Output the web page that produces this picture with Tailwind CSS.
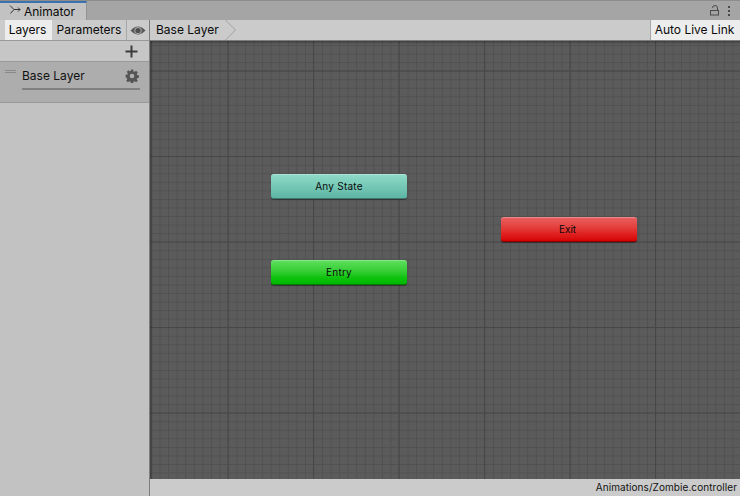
<!DOCTYPE html>
<html lang="en">
<head>
    <title>Animator</title>
    <script src="https://cdn.jsdelivr.net/npm/@tailwindcss/browser@4"></script>
</head>
<body class="w-[740px] h-[496px] overflow-hidden bg-[#c2c2c2] font-['Inter',sans-serif] text-[12px] text-[#0a0a0a]">
    <div class="flex flex-col h-full">
        <!-- Tab bar -->
        <div class="flex h-[20px] shrink-0 bg-[#a5a5a5] border-t border-[#8c8c8c]">
            <div class="flex items-center w-[87px] h-[19px] bg-[#c2c2c2] border-t-2 border-[#3a72b0] border-r border-r-[#939393] pl-[9px] gap-[3px]">
                <svg class="-mt-[3px]" width="12" height="12" viewBox="0 0 12 12" fill="none" stroke="#333" stroke-width="1">
                    <path d="M1 1.500 L5 5.500 L11 5.500 M1.500 9.500 L5 5.500"/>
                    <path d="M9 3.500 L11 5.500 L9 7.500"/>
                </svg>
                <span>Animator</span>
            </div>
            <div class="flex-1 flex items-center justify-end gap-[8px] pr-[10px]">
                <svg width="10" height="11" viewBox="0 0 10 11" fill="none" stroke="#4a4a4a">
                    <rect x="0.500" y="5.500" width="8" height="4.500"/>
                    <path d="M2.500 3 Q2.500 0.500 5 0.500 Q7.500 0.500 7.500 3 V5.500"/>
                </svg>
                <div class="flex flex-col gap-[2px]">
                    <div class="w-[2px] h-[2px] bg-[#4a4a4a]"></div>
                    <div class="w-[2px] h-[2px] bg-[#4a4a4a]"></div>
                    <div class="w-[2px] h-[2px] bg-[#4a4a4a]"></div>
                </div>
            </div>
        </div>

        <div class="flex flex-1 min-h-0">
            <!-- Left panel -->
            <div class="w-[150px] shrink-0 flex flex-col border-r border-[#7d7d7d]">
                <div class="flex h-[21px] bg-[#cbcbcb] border-b border-[#999]">
                    <div class="w-[5px]"></div>
                    <div class="w-[47px] flex items-center justify-center pr-[2px] bg-[#ededed]">Layers</div>
                    <div class="w-[75px] flex items-center justify-center border-r border-[#a8a8a8]">Parameters</div>
                    <div class="flex-1 flex items-center justify-center">
                        <svg width="16" height="11" viewBox="0 0 16 11">
                            <path d="M0.500 5.500 Q8 -2.500 15.500 5.500 Q8 13.500 0.500 5.500 Z" fill="#5a5a5a"/>
                            <circle cx="8" cy="5.500" r="3.600" fill="#a8a8a8"/>
                            <circle cx="8" cy="5.500" r="2.600" fill="#4f4f4f"/>
                        </svg>
                    </div>
                </div>
                <div class="flex items-center justify-end h-[21px] pr-[11px] bg-[#c6c6c6] border-b border-[#999]">
                    <svg width="13" height="13" viewBox="0 0 13 13" fill="#3c3c3c">
                        <rect x="5.500" y="0.500" width="2" height="12"/>
                        <rect x="0.500" y="5.500" width="12" height="2"/>
                    </svg>
                </div>
                <div class="relative h-[41px] bg-[#adadad] border-b border-[#999] pl-[22px] pr-[10px] pt-[6px]">
                    <div class="absolute left-[5px] top-[8px] w-[11px] h-[3px] border-y border-[#8a8a8a]"></div>
                    <div class="flex items-center justify-between h-[16px]">
                        <span class="text-[#111]">Base Layer</span>
                        <svg class="-mt-[1px]" width="14" height="14" viewBox="0 0 24 24" fill="#555">
                            <path fill-rule="evenodd" d="M10 1h4l.6 3.100 1.900.8 2.600-1.800 2.800 2.800-1.800 2.600.8 1.900 3.100.6v4l-3.100.6-.8 1.900 1.800 2.600-2.800 2.800-2.600-1.800-1.900.8-.6 3.100h-4l-.6-3.100-1.900-.8-2.600 1.800-2.800-2.800 1.800-2.600-.8-1.900L1 14v-4l3.100-.6.8-1.900-1.800-2.600 2.800-2.800 2.600 1.800 1.900-.8zM12 8a4 4 0 1 0 0 8 4 4 0 0 0 0-8z"/>
                        </svg>
                    </div>
                    <div class="mt-[4px] -mr-[1px] h-[2px] bg-[#808080]"></div>
                </div>
                <div class="flex-1 bg-[#c2c2c2]"></div>
            </div>

            <!-- Right panel -->
            <div class="flex-1 flex flex-col min-w-0">
                <div class="flex h-[21px] shrink-0 bg-[#cbcbcb] border-b border-[#7d7d7d]">
                    <div class="relative flex items-center pl-[6px] w-[88px]">
                        <span>Base Layer</span>
                        <svg class="absolute left-[75px] top-0" width="12" height="21" viewBox="0 0 12 21" fill="none" stroke="#a0a0a0">
                            <path d="M0.500 0 L10.500 10 L0.500 20"/>
                        </svg>
                    </div>
                    <div class="flex-1"></div>
                    <div class="w-[90px] flex items-center justify-center pr-[2px] bg-[#ededed] border-l border-[#a8a8a8]">Auto Live Link</div>
                </div>

                <!-- Graph canvas -->
                <div class="relative flex-1 overflow-hidden bg-[#5b5b5b]">
                    <svg class="absolute inset-0" width="590" height="438">
                        <defs>
                            <pattern id="minor" x="-7.500" y="-4.500" width="8.550" height="8.550" patternUnits="userSpaceOnUse">
                                <path d="M0.500 0 V8.550 M0 0.500 H8.550" stroke="#515151" stroke-width="1" fill="none"/>
                            </pattern>
                            <pattern id="major" x="77.500" y="29.500" width="85.500" height="85.500" patternUnits="userSpaceOnUse">
                                <path d="M0.500 0 V85.500 M0 0.500 H85.500" stroke="#474747" stroke-width="1" fill="none"/>
                            </pattern>
                        </defs>
                        <rect width="590" height="438" fill="url(#minor)"/>
                        <rect width="590" height="438" fill="url(#major)"/>
                    </svg>
                    <div class="absolute inset-x-0 top-0 h-[3px] bg-gradient-to-b from-black/30 to-transparent"></div>
                    <div class="absolute inset-y-0 left-0 w-[3px] bg-gradient-to-r from-black/30 to-transparent"></div>

                    <div class="absolute left-[121px] top-[133px] w-[136px] h-[25px] rounded-[3px] flex items-center justify-center text-[10px] tracking-[0.25px] text-[#0a0a0a] bg-gradient-to-b from-[#8fdcc8] to-[#5db5a5] border-b border-[#3f7a70] shadow-[inset_0_1px_0_rgba(255,255,255,0.25),0_1px_1px_rgba(0,0,0,0.4)]">Any State</div>
                    <div class="absolute left-[351px] top-[176px] w-[136px] h-[25px] rounded-[3px] flex items-center justify-center pr-[3px] text-[10px] text-[#0a0a0a] bg-gradient-to-b from-[#e86060] via-[#e02020] via-70% to-[#d40000] border-b border-[#8c0000] shadow-[inset_0_1px_0_rgba(255,255,255,0.25),0_1px_1px_rgba(0,0,0,0.4)]">Exit</div>
                    <div class="absolute left-[121px] top-[219px] w-[136px] h-[25px] rounded-[3px] flex items-center justify-center text-[10px] tracking-[0.25px] text-[#0a0a0a] bg-gradient-to-b from-[#5ee05e] via-[#10c410] via-70% to-[#00b800] border-b border-[#007a00] shadow-[inset_0_1px_0_rgba(255,255,255,0.25),0_1px_1px_rgba(0,0,0,0.4)]">Entry</div>
                </div>

                <div class="flex items-center justify-end h-[17px] shrink-0 pr-[3px] bg-[#cbcbcb] text-[10px] tracking-[0.07px] text-[#111]">Animations/Zombie.controller</div>
            </div>
        </div>
    </div>
</body>
</html>
